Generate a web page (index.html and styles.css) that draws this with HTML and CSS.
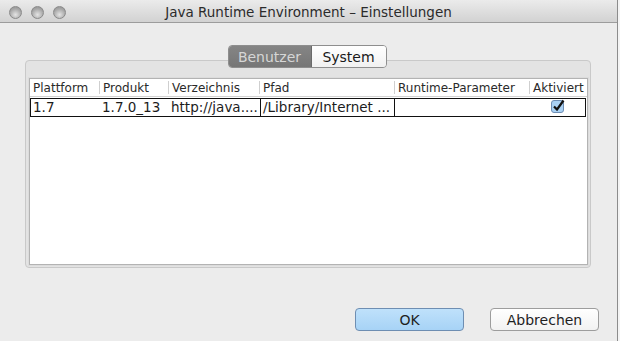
FILE: index.html
```html
<!DOCTYPE html>
<html lang="de">
<head>
    <meta charset="UTF-8">
    <title>Java Runtime Environment – Einstellungen</title>
    <link rel="stylesheet" href="styles.css">
</head>
<body>
<div class="window">
    <div class="titlebar">
        <div class="lights">
            <span class="light"></span>
            <span class="light"></span>
            <span class="light"></span>
        </div>
        <div class="title">Java Runtime Environment – Einstellungen</div>
        <div class="lights-spacer"></div>
    </div>

    <div class="content">
        <div class="segmented">
            <span class="seg seg-on">Benutzer</span>
            <span class="seg">System</span>
        </div>
        <div class="groupbox">
            <div class="table">
                <div class="thead">
                    <div class="th">Plattform</div>
                    <div class="th">Produkt</div>
                    <div class="th">Verzeichnis</div>
                    <div class="th">Pfad</div>
                    <div class="th">Runtime-Parameter</div>
                    <div class="th">Aktiviert</div>
                </div>
                <div class="trow">
                    <div class="td">1.7</div>
                    <div class="td">1.7.0_13</div>
                    <div class="td">http://java....</div>
                    <div class="td td-focus">/Library/Internet ...</div>
                    <div class="td"></div>
                    <div class="td td-check">
                        <svg width="14" height="15" viewBox="0 0 14 15">
                            <rect x="0.5" y="1.5" width="12" height="12" rx="2.5" fill="#a9d1f4" stroke="#6d8db3"/>
                            <path d="M3 7.5 L6 10.5 L12.5 1.5" fill="none" stroke="#111" stroke-width="2.2"/>
                        </svg>
                    </div>
                </div>
            </div>
        </div>
    </div>

    <div class="buttons">
        <button class="btn btn-default">OK</button>
        <button class="btn">Abbrechen</button>
    </div>
</div>
</body>
</html>
```

FILE: styles.css
```css
* {
    margin: 0;
    padding: 0;
    box-sizing: border-box;
}

body {
    width: 620px;
    height: 341px;
    background: #f4f4f4;
    font-family: "DejaVu Sans", "Liberation Sans", sans-serif;
    color: #1c1c1c;
    overflow: hidden;
}

.window {
    width: 618px;
    height: 341px;
    background: #ececec;
    border-right: 1px solid #8c8c8c;
    display: flex;
    flex-direction: column;
}

/* title bar */
.titlebar {
    height: 23px;
    display: flex;
    align-items: center;
    background: linear-gradient(#ebebeb, #d2d2d2);
    border-bottom: 1px solid #9c9c9c;
}

.lights {
    width: 66px;
    display: flex;
    gap: 9px;
    padding-left: 9px;
    padding-top: 2px;
}

.light {
    width: 13px;
    height: 13px;
    border-radius: 50%;
    background: radial-gradient(circle at 50% 70%, #e4e4e4, #a9a9a9 60%, #8d8d8d);
    border: 1px solid #8a8a8a;
}

.title {
    flex: 1;
    text-align: center;
    font-size: 13.5px;
    color: #2b2b2b;
    padding-top: 2px;
}

.lights-spacer {
    width: 66px;
}

/* tab view */
.content {
    margin: 22px 26px 0 25px;
    display: flex;
    flex-direction: column;
}

.segmented {
    align-self: center;
    margin-left: -2px;
    display: flex;
    height: 23px;
    border: 1px solid #8e8e8e;
    border-radius: 4px;
    overflow: hidden;
    position: relative;
    z-index: 1;
    margin-bottom: -8px;
    font-size: 14px;
}

.seg {
    display: flex;
    align-items: center;
    justify-content: center;
    background: linear-gradient(#ffffff, #f1f1f1);
    color: #1a1a1a;
    width: 74px;
}

.seg-on {
    width: 83px;
    background: linear-gradient(#858585, #767676);
    color: #d6d6d6;
    border-right: 1px solid #6a6a6a;
}

.groupbox {
    height: 208px;
    background: #e3e3e3;
    border: 1px solid #c9c9c9;
    border-radius: 4px;
    padding: 17px 2px 2px 3px;
}

/* table */
.table {
    height: 100%;
    background: #fff;
    border: 1px solid #b3b3b3;
    box-shadow: 0 0 0 1px #dcdcdc;
}

.thead,
.trow {
    display: grid;
    grid-template-columns: 69px 69px 91px 135px 135px 1fr;
}

.thead {
    height: 18px;
    border-bottom: 1px solid #d2d2d2;
    font-size: 12px;
    color: #2a2a2a;
}

.th {
    padding: 1px 0 0 3px;
    border-left: 1px solid #cfcfcf;
    margin: 2px 0;
    line-height: 12px;
    white-space: nowrap;
}

.th:first-child {
    border-left: none;
}

.trow {
    height: 19px;
    border: 1px solid #111;
    font-size: 13.5px;
    margin-top: 1px;
    margin-right: 1px;
}

.td {
    padding: 0 0 0 2px;
    line-height: 16px;
    white-space: nowrap;
    overflow: hidden;
}

.td-focus {
    border-left: 1px solid #111;
    border-right: 1px solid #111;
}

.td-check {
    padding-left: 21px;
}

/* buttons */
.buttons {
    margin-top: auto;
    margin-bottom: 10px;
    display: flex;
    justify-content: flex-end;
    gap: 26px;
    padding-right: 18px;
}

.btn {
    width: 109px;
    height: 23px;
    font-family: "DejaVu Sans", "Liberation Sans", sans-serif;
    font-size: 14px;
    color: #1f1f1f;
    border: 1px solid #9d9d9d;
    border-radius: 4px;
    background: linear-gradient(#ffffff, #f2f2f2);
}

.btn-default {
    background: linear-gradient(#bfe1fb, #a7d3f6);
    border-color: #6e8eb2;
}
```
